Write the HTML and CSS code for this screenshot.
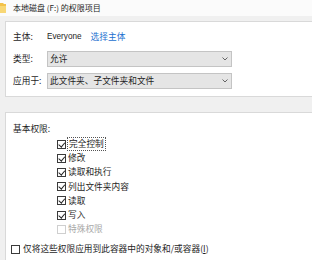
FILE: index.html
```html
<!DOCTYPE html>
<html lang="zh-CN">
<head>
<meta charset="utf-8">
<link rel="stylesheet" href="styles.css">
</head>
<body>
<div class="titlebar">
  <svg class="folder" width="6" height="11" viewBox="0 0 6 11"><path d="M0 1h3l1 1h2v9H0z" fill="#f3c24a"/><path d="M0 4h6v7H0z" fill="#f8d775"/></svg>
  <span class="title">本地磁盘 (F:) 的权限项目</span>
</div>
<div class="panel top">
  <div class="row r1">
    <span class="label">主体:</span>
    <span class="value">Everyone</span>
    <span class="link">选择主体</span>
  </div>
  <div class="row r2">
    <span class="label">类型:</span>
    <div class="select"><span>允许</span><svg width="6" height="4" viewBox="0 0 6 4"><path d="M0.5 0.5L3 3L5.5 0.5" fill="none" stroke="#555" stroke-width="0.9"/></svg></div>
  </div>
  <div class="row r3">
    <span class="label">应用于:</span>
    <div class="select"><span>此文件夹、子文件夹和文件</span><svg width="6" height="4" viewBox="0 0 6 4"><path d="M0.5 0.5L3 3L5.5 0.5" fill="none" stroke="#555" stroke-width="0.9"/></svg></div>
  </div>
</div>
<div class="panel bottom">
  <div class="heading">基本权限:</div>
  <ul class="perms">
    <li><span class="cb checked"></span><span class="focus">完全控制</span></li>
    <li><span class="cb checked"></span><span>修改</span></li>
    <li><span class="cb checked"></span><span>读取和执行</span></li>
    <li><span class="cb checked"></span><span>列出文件夹内容</span></li>
    <li><span class="cb checked"></span><span>读取</span></li>
    <li><span class="cb checked"></span><span>写入</span></li>
    <li class="disabled"><span class="cb"></span><span>特殊权限</span></li>
  </ul>
  <div class="only"><span class="cb"></span><span>仅将这些权限应用到此容器中的对象和/或容器(<u>I</u>)</span></div>
</div>
</body>
</html>
```

FILE: styles.css
```css
* { box-sizing: border-box; }
html, body { margin: 0; padding: 0; }
body {
  width: 312px;
  height: 260px;
  overflow: hidden;
  background: #f0f0f0;
  font-family: "Noto Sans CJK SC", "Noto Sans", sans-serif;
  font-size: 8.7px;
  line-height: 12px;
  color: #1e1e1e;
  white-space: nowrap;
}
.titlebar {
  height: 16px;
  background: #fbfbfb;
  display: flex;
  align-items: center;
  gap: 7px;
}
.folder { display: block; margin-top: -2px; }
.title { font-size: 8px; line-height: 1; }
.panel {
  margin-left: 5px;
  background: #fff;
  border: 1px solid #d9d9d9;
  border-right: none;
}
.panel.top {
  margin-top: 5px;
  height: 76px;
  padding: 7px 0 0 7px;
  display: flex;
  flex-direction: column;
}
.row { display: flex; align-items: center; }
.label { width: 34px; flex: none; }
.r1 { height: 16px; }
.r1 .value { font-family: "Liberation Sans", sans-serif; font-size: 8.2px; }
.r1 .link { color: #1a6fcf; margin-left: 9px; }
.r2 { margin-top: 6px; height: 16px; }
.r3 { margin-top: 6px; height: 16px; }
.select {
  width: 185px;
  height: 16px;
  background: #e5e5e5;
  border: 1px solid #c4c4c4;
  display: flex;
  align-items: center;
  justify-content: space-between;
  padding: 0 3px 0 2px;
}
.select svg { display: block; }
.panel.bottom {
  margin-top: 15px;
  height: 160px;
  padding: 9px 0 0 7px;
}
.heading { line-height: 14px; }
.perms {
  list-style: none;
  margin: 1px 0 0 44px;
  padding: 0;
}
.perms li {
  height: 14.2px;
  display: flex;
  align-items: center;
  gap: 2px;
}
.cb {
  width: 9px;
  height: 9px;
  border: 1px solid #3a3a3a;
  background: #fff;
  position: relative;
  flex: none;
}
.cb.checked::after {
  content: "";
  position: absolute;
  left: 1.5px;
  top: 0px;
  width: 2.5px;
  height: 4.5px;
  border: solid #222;
  border-width: 0 1px 1px 0;
  transform: rotate(40deg);
}
.focus { outline: 1px dotted #555; outline-offset: 0; padding: 0 1px; }
.disabled { color: #a8a8a8; }
.disabled .cb { border-color: #cfcfcf; }
.only {
  margin-top: 7px;
  margin-left: -2px;
  display: flex;
  align-items: center;
  gap: 3px;
}
```
